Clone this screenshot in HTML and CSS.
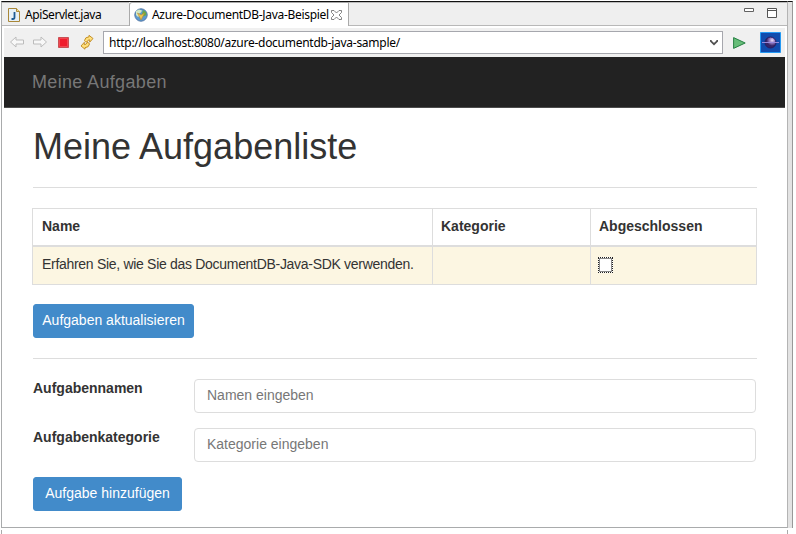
FILE: index.html
```html
<!DOCTYPE html>
<html lang="de">
<head>
<meta charset="utf-8">
<title>Meine Aufgaben</title>
<link rel="stylesheet" href="styles.css">
</head>
<body>
<div class="window">
  <div class="tabs">
    <div class="tab tab-file">
      <svg width="12" height="14" viewBox="0 0 12 14"><path d="M.5.5h8l3 3v10H.5z" fill="#e6f0f8" stroke="#a98738"/><path d="M8.500.5v3h3" fill="#f4d98b" stroke="#a98738"/><path d="M6.500 4v5.200q0 1.800-1.600 1.800H3.500" fill="none" stroke="#1d5a94" stroke-width="1.800"/></svg>
      <span class="file-name">ApiServlet.java</span>
    </div>
    <div class="tab tab-active">
      <svg width="14" height="14" viewBox="0 0 14 14"><circle cx="7" cy="7" r="6.200" fill="#5c9ad0" stroke="#5579a6"/><path d="M2 3l3-1.500 3 1-1 2-2 1 1 2-2 1.500L2 7z" fill="#d2e8c5"/><path d="M9 2l3 2 .5 3-3 1.500L8 6z" fill="#69a84b"/><path d="M3.500 5l3.500 7 3.500-7-3.500 2z" fill="#efc652" stroke="#b8882d" stroke-width=".6"/></svg>
      <span class="page-name">Azure-DocumentDB-Java-Beispiel</span>
      <svg class="close" width="11" height="10" viewBox="0 0 11 10"><path d="M.5.500h2.500l2.500 2.500L8 .500h2.500v2L8 5l2.500 2.500v2H8L5.500 7 3 9.500H.5v-2L3 5 .5 2.500z" fill="#fff" stroke="#666" stroke-width=".8"/></svg>
    </div>
    <div class="controls">
      <svg width="10" height="4"><path d="M.5.5h9v3h-9z" fill="#fff" stroke="#626262"/></svg>
      <svg width="10" height="10"><path d="M.5.5h9v9h-9zM0 2.500h10" fill="#fff" stroke="#555"/></svg>
    </div>
  </div>
  <div class="toolbar">
    <svg width="96" height="29" viewBox="0 0 96 29">
      <path d="M6.500 14l5.500-5v3h7.500v4H12v3z" fill="#f8f8f8" stroke="#bcbcbc" stroke-linejoin="round"/>
      <path d="M42.500 14L37 9v3h-7.500v4H37v3z" fill="#f8f8f8" stroke="#bcbcbc" stroke-linejoin="round"/>
      <path d="M54.500 9.500h10v10h-10z" fill="#ef1d2c" stroke="#c85155"/><path d="M55.500 10.500h8v8h-8z" fill="none" stroke="#f34650"/>
      <g fill="#ffe07b" stroke="#bd861e" stroke-width=".9" stroke-linejoin="round"><path id="half-arrow" d="M80.500 12.500q.5-3.500 4.500-3.700V7.300l4 3.200-3.300 3.700v-2.400q-2.200 0-2.700 2.200-2 .2-2.500-1.500z"/><path d="M87 16q-.5 3.500-4.500 3.700v1.500l-4-3.200 3.300-3.700v2.400q2.200 0 2.700-2.200 2-.2 2.500 1.500z" transform="translate(-1.500)"/></g>
    </svg>
    <div class="address"><span>http://localhost:8080/azure-documentdb-java-sample/</span>
      <svg width="8" height="7" viewBox="0 0 8 7"><path d="M.8 1v1L4 5.200 7.200 2V1" fill="none" stroke="#505050" stroke-width="1.700"/></svg>
    </div>
    <svg class="go" width="13" height="12" viewBox="0 0 13 12"><path d="M.6.6L12.200 6 .6 11.400z" fill="#67bd79" stroke="#278044"/></svg>
    <svg class="eclipse" width="21" height="21" viewBox="0 0 21 21"><defs><radialGradient id="orb" cx=".65" cy=".3"><stop offset="0" stop-color="#eee0fa"/><stop offset=".55" stop-color="#8a70b8"/><stop offset="1" stop-color="#352568"/></radialGradient></defs><path d="M.5.5h20v20H.5z" fill="#104cae" stroke="#249af5"/><circle cx="10.500" cy="10.500" r="5.500" fill="url(#orb)" stroke="#281d63"/><path d="M2 10.500h17" stroke="#9589dc" stroke-width="1"/></svg>
  </div>
  <div class="page">
    <nav class="navbar"><span>Meine Aufgaben</span></nav>
    <main>
      <h1><span>Meine Aufgabenliste</span></h1>
      <hr>
      <table>
        <thead><tr><th class="c-name">Name</th><th class="c-cat">Kategorie</th><th class="c-done">Abgeschlossen</th></tr></thead>
        <tbody><tr><td><span class="task">Erfahren Sie, wie Sie das DocumentDB-Java-SDK verwenden.</span></td><td></td><td><span class="check"></span></td></tr></tbody>
      </table>
      <button class="update" type="button">Aufgaben aktualisieren</button>
      <hr class="second">
      <form>
        <div class="row"><label for="name"><span class="l1">Aufgabennamen</span></label><input id="name" placeholder="Namen eingeben"></div>
        <div class="row"><label for="cat"><span class="l2">Aufgabenkategorie</span></label><input id="cat" placeholder="Kategorie eingeben"></div>
        <button class="add" type="button">Aufgabe hinzufügen</button>
      </form>
    </main>
  </div>
</div>
<div class="gutter"></div>
<div class="below"></div>
</body>
</html>
```
FILE: styles.css
```css
* { box-sizing: border-box; }
body { margin: 0; width: 793px; height: 534px; overflow: hidden; background: #fff; border-top: 1px solid #fff;
  display: grid; grid-template: 527px 6px / 788px 5px; font: 14px/20px "Liberation Sans", Arial, sans-serif; color: #333; }
svg { display: block; flex: none; }
.window { margin-left: 1px; border: 1px solid #a9abac; border-top-color: #111; border-right-color: #b4b4b4; background: #fff; display: flex; flex-direction: column; }
.gutter { background: #e3e3e3; border-top: 1px solid #111; border-right: 1px solid #999; }
.below { margin: 2px 0 0 1px; border-left: 1px solid #aaa; border-right: 1px solid #aaa; }
.tabs, .toolbar { font-family: "Noto Sans", "Open Sans", sans-serif; font-size: 12px; color: #000; display: flex; white-space: nowrap; }
.tabs { height: 24px; background: #efefef; border-bottom: 1px solid #b8b8b8; }
.tab { display: flex; align-items: center; height: 24px; }
.tab-file { width: 127px; padding: 1px 0 0 6px; gap: 5px; border-top: 1px solid #b8b8b8; height: 23px; }
.tab-active { width: 220px; padding-left: 4px; gap: 4px; background: #fff; border: 1px solid #aaa; border-bottom: 0; border-radius: 3px 0 0 0; }
.file-name { width: 77px; letter-spacing: -.42px; }
.page-name { width: 178px; letter-spacing: -.3px; }
.close { margin-left: -3px; }
.controls { flex: 1; display: flex; justify-content: flex-end; gap: 13px; padding: 5px 10px 0 0; border-top: 1px solid #bbb; }
.toolbar { margin: 2px 2px 0; height: 29px; background: #f0f0f0; align-items: center; }
.address { margin-left: 3px; width: 620px; height: 23px; border: 1px solid #a6a7ad; background: #fff; display: flex; align-items: center; justify-content: space-between; padding: 0 4px 0 5px; }
.address span { letter-spacing: -.27px; }
.go { margin-left: 10px; }
.eclipse { margin-left: 14px; }
.page { margin: 0 2px; }
.navbar { height: 51px; background: #222; border-bottom: 1px solid #4c4c4c; padding: 15px 28px; font-size: 18px; letter-spacing: .34px; color: #777; }
main { padding: 0 28px 0 29px; }
h1 { margin: 19px 0 20px; font-size: 36px; line-height: 40px; font-weight: 400; white-space: nowrap; }
hr { margin: 0; border: 0; height: 1px; background: #ddd; }
table { width: 725px; margin: 20px 0 0 -1px; border-collapse: collapse; table-layout: fixed; border: 1px solid #ddd; }
th, td { padding: 7px 8px 9px; height: 38px; border: 1px solid #ddd; text-align: left; vertical-align: top; line-height: 20px; }
th { border-bottom-width: 2px; height: 37px; }
td { background: #fcf6e2; white-space: nowrap; }
th:first-child, td:first-child { padding-left: 9px; }
.c-name { width: 400px; }
.c-cat { width: 158px; }
.task { letter-spacing: -.3px; }
.check { display: block; width: 15px; height: 16px; margin: 3px 0 0 -1px; background: #fff; border: 1px dotted #222; outline: 1px solid #888; outline-offset: -2px; }
button { display: block; border: 1px solid #428bca; border-radius: 3px; background: #428bca; color: #fff; font: inherit; height: 34px; padding: 0; white-space: nowrap; }
.update { width: 161px; margin-top: 19px; padding-bottom: 1px; }
.second { margin: 20px 0; }
.row { display: flex; height: 34px; margin-bottom: 15px; }
label { width: 161px; margin-top: -1px; font-weight: 700; }
input { width: 562px; border: 1px solid #ddd; border-radius: 4px; padding: 0 12px 1px; font: inherit; background: #fff; }
input::placeholder { color: #777; opacity: 1; }
.add { width: 149px; padding-bottom: 1px; }
```
